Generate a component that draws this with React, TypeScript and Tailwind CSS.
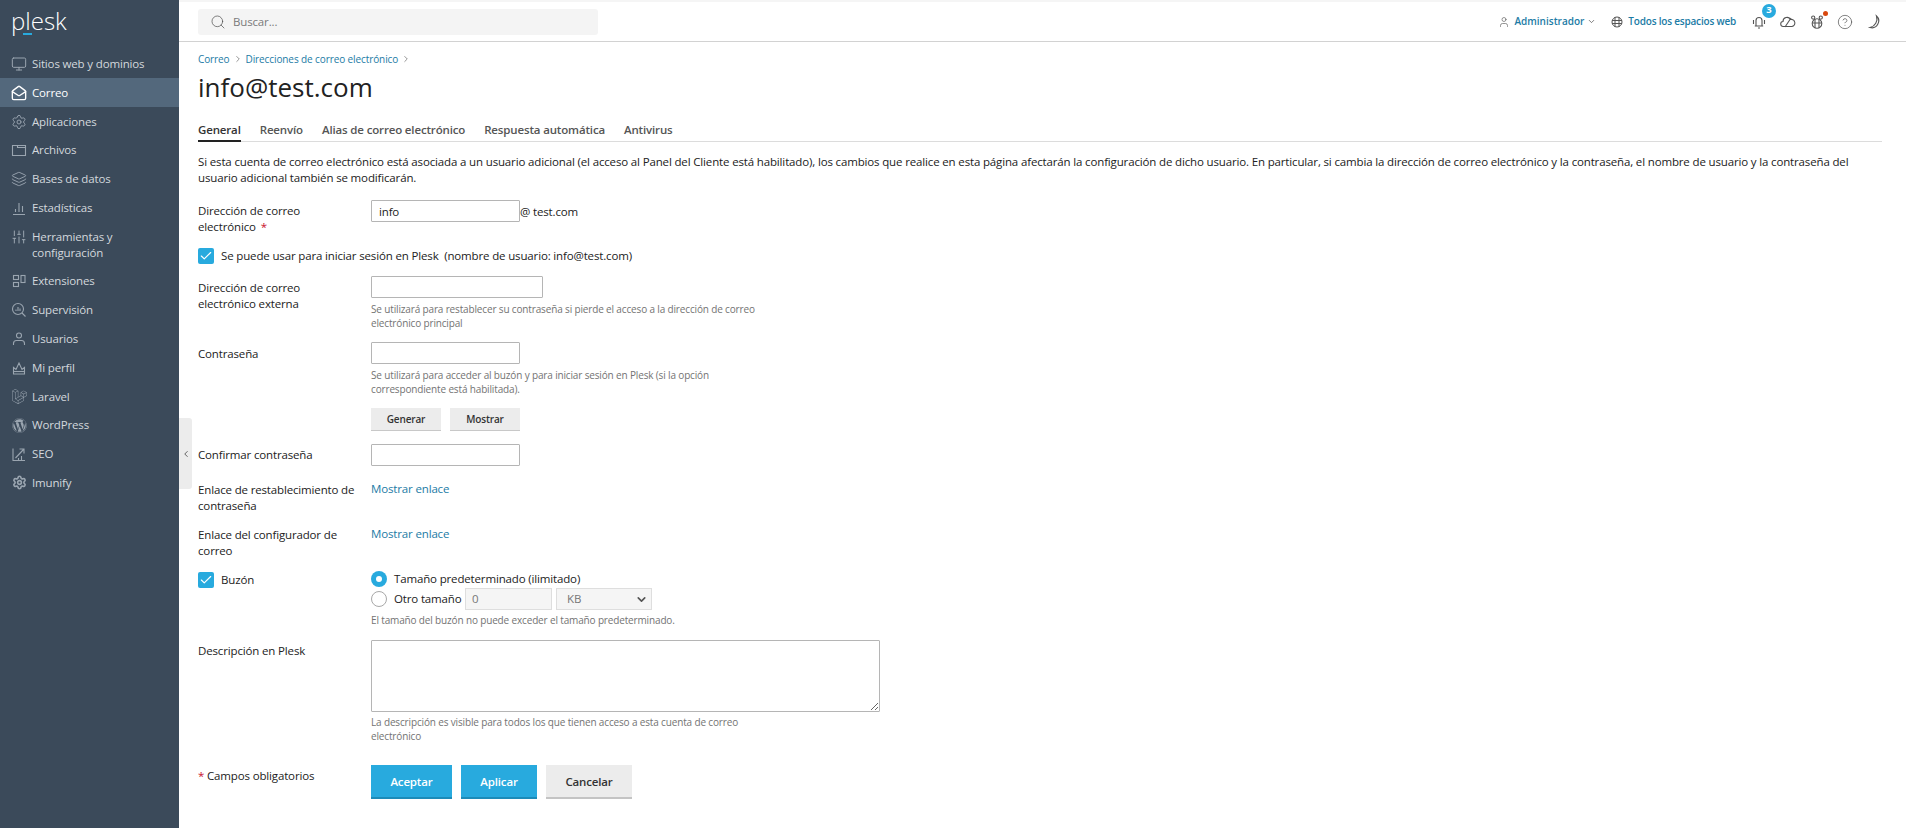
import React from "react";
import { Monitor, MailOpen, Settings, Layers, SlidersVertical, User, Search, ChevronRight, ChevronDown, ChevronLeft, CircleHelp, Check } from "lucide-react";
import { FaWordpress, FaLaravel } from "react-icons/fa";

const S = ({ children }: { children: React.ReactNode }) => (
  <svg width="16" height="16" viewBox="0 0 16 16" fill="none" stroke="currentColor" strokeWidth="1.1" className="shrink-0">{children}</svg>
);

const nav: [string, React.ReactNode, boolean?][] = [
  ["Sitios web y dominios", <Monitor size={16} strokeWidth={1.5} className="shrink-0" />],
  ["Correo", <MailOpen size={16} strokeWidth={2} className="shrink-0" />, true],
  ["Aplicaciones", <Settings size={16} strokeWidth={1.4} className="shrink-0" />],
  ["Archivos", <S><path d="M1.5 3.5h5v2h8v8h-13z" /><path d="M6.5 3.5h8v2" /></S>],
  ["Bases de datos", <Layers size={16} strokeWidth={1.4} className="shrink-0" />],
  ["Estadísticas", <S><path d="M2 14.5h12M4.5 12V9M8 12V3M11.5 12V6" /></S>],
  ["Herramientas y configuración", <SlidersVertical size={16} strokeWidth={1.5} className="shrink-0" />],
  ["Extensiones", <S><rect x="2.5" y="2.5" width="5" height="4" /><rect x="2.5" y="9.5" width="5" height="4" /><rect x="10" y="2.5" width="4" height="7" /></S>],
  ["Supervisión", <S><circle cx="7" cy="7" r="5.5" /><path d="M11 11l3.5 3.5M5 9V7.5M7 9V5M9 9V6.5" /></S>],
  ["Usuarios", <S><circle cx="8" cy="4.5" r="2.5" /><path d="M2.5 14v-1.5a3 3 0 0 1 3-3h5a3 3 0 0 1 3 3V14" /></S>],
  ["Mi perfil", <S><path d="M2.5 7.5 5 9.5 8 3l3 6.5 2.5-2V14h-11z" /><path d="M2.5 11.5h11" /></S>],
  ["Laravel", <FaLaravel size={15} className="shrink-0" />],
  ["WordPress", <FaWordpress size={15} className="shrink-0" />],
  ["SEO", <S><path d="M2 2.5v12h12" /><path d="M4.5 12l8-8.5M8.5 3h4.5v4.5M7.5 14v-2M10.5 14v-4" /></S>],
  ["Imunify", <Settings size={15} strokeWidth={2.6} className="shrink-0" />],
];

function Row({ label, children, className = "" }: { label: React.ReactNode; children: React.ReactNode; className?: string }) {
  return (
    <div className={`flex ${className}`}>
      <div className="w-[173px] shrink-0 pr-[15px] leading-[16px]">{label}</div>
      <div className="min-w-0 flex-1">{children}</div>
    </div>
  );
}

const inputCls = "block h-[22px] border border-[#b5b5b5] bg-white px-[7px] text-[11.5px] text-[#222] rounded-[1px]";

function Box() {
  return (
    <span className="flex h-[16px] w-[16px] shrink-0 items-center justify-center rounded-[2px] bg-[#28aade]">
      <Check size={14} strokeWidth={2} className="text-white" />
    </span>
  );
}

function Hint({ children, className = "mt-[4px]" }: { children: React.ReactNode; className?: string }) {
  return <div className={`${className} w-[400px] text-[10px] leading-[14px] tracking-[-0.15px] text-[#737373]`}>{children}</div>;
}

export default function App() {
  return (
    <div className="flex h-[828px] w-[1906px] overflow-hidden bg-white text-[11.5px] tracking-[-0.15px] text-[#222]" style={{ fontFamily: '"Open Sans", sans-serif' }}>
      <aside className="relative w-[179px] shrink-0 bg-[#3b4a5a] text-[#d3d8dd]">
        <div className="relative h-[49.6px] pl-[11px] pt-[9px]">
          <span className="block text-[24px] font-light leading-[24px] tracking-normal text-white">plesk</span>
          <span className="absolute left-[23px] top-[33px] h-[2px] w-[9px] bg-[#28aade]" />
        </div>
        <nav>
          {nav.map(([t, icon, active]) => (
            <div key={t} className={`flex items-start gap-[5px] py-[6.4px] pl-[11px] pr-[10px] leading-[16px] ${active ? "bg-[#53687c] text-white" : ""}`}>
              <span className={`flex h-[16px] w-[16px] shrink-0 items-center justify-center ${active ? "text-white" : "text-[#9aa5b0]"}`}>{icon}</span>
              <span>{t}</span>
            </div>
          ))}
        </nav>
        <div className="absolute left-[179px] top-[418px] z-10 flex h-[71px] w-[13px] items-center justify-center rounded-r-[3px] bg-[#ececec]">
          <ChevronLeft size={10} strokeWidth={2} className="text-[#444]" />
        </div>
      </aside>

      <div className="flex min-w-0 flex-1 flex-col">
        <header className="flex h-[42px] shrink-0 items-center border-t-2 border-b border-t-[#f5f5f5] border-b-[#d2d2d2] pl-[19px] pr-[23px]">
          <div className="flex h-[26px] w-[400px] items-center gap-[7px] rounded-[3px] bg-[#f4f4f4] px-[12px] text-[#7a7a7a]">
            <Search size={16} strokeWidth={1} className="text-[#444]" />
            <span>Buscar...</span>
          </div>
          <div className="ml-auto flex items-center text-[10px] tracking-normal text-[#1c7ba5]">
            <User size={12} strokeWidth={1.25} className="text-[#555]" />
            <span className="ml-[4px] font-semibold">Administrador</span>
            <ChevronDown size={9} strokeWidth={2} className="ml-[3px] text-[#555]" />
            <svg width="12" height="12" viewBox="0 0 12 12" fill="none" stroke="#555" className="ml-[15px]"><circle cx="6" cy="6" r="5" /><path d="M1 4.5h10M1 7.5h10M4 1v10M8 1v10" /></svg>
            <span className="ml-[5px] font-semibold tracking-[-0.2px]">Todos los espacios web</span>
            <span className="relative ml-[15px] text-[#555]">
              <S><path d="M5 12V6.5a3 3 0 0 1 6 0V12" /><path d="M3.8 12h8.4M7 14h2M2.5 6v4M13.5 6v4" /></S>
              <span className="absolute left-[11px] top-[-10px] flex h-[14px] w-[14px] items-center justify-center rounded-full bg-[#28aade] text-[9.5px] font-bold text-white">3</span>
            </span>
            <span className="ml-[13px] text-[#555]">
              <S><path d="M5 12.5H3.5a2.5 2.5 0 0 1-.5-5A4 4 0 0 1 10.5 5.5 3.5 3.5 0 0 1 12 12.5H5" /><path d="M5 13l6-9" /></S>
            </span>
            <span className="relative ml-[13px] text-[#555]">
              <S><circle cx="8" cy="9.5" r="4.8" /><circle cx="4.2" cy="3.6" r="1.6" /><circle cx="11.8" cy="3.6" r="1.6" /><path d="M3.4 9h9.2M6 5v9M10 5v9" /></S>
              <span className="absolute right-[-3px] top-[-3px] h-[5px] w-[5px] rounded-full bg-[#d9480f]" />
            </span>
            <CircleHelp size={16} strokeWidth={1.1} className="ml-[12px] text-[#555]" />
            <span className="ml-[14px] text-[#555]">
              <S><path d="M9.5 2A6.8 6.8 0 0 1 3 13.5 9 9 0 0 0 9.5 2z" /></S>
            </span>
          </div>
        </header>

        <main className="flex-1 pl-[19px] pr-[24px]">
          <div className="mt-[10px] flex h-[14px] items-center text-[10px] tracking-[-0.1px] text-[#1c7ba5]">
            <span>Correo</span>
            <ChevronRight size={10} strokeWidth={1.5} className="mx-[3px] text-[#555]" />
            <span>Direcciones de correo electrónico</span>
            <ChevronRight size={10} strokeWidth={1.5} className="mx-[3px] text-[#555]" />
          </div>
          <h1 className="mt-[5px] text-[26px] font-normal leading-[32px] tracking-normal text-[#222]">info@test.com</h1>
          <div className="mt-[14px] flex h-[25px] gap-[19px] border-b border-[#dcdcdc] pt-[4px] font-semibold text-[#555]">
            <span className="h-[21px] border-b-2 border-[#222] text-[#333]">General</span>
            <span>Reenvío</span>
            <span>Alias de correo electrónico</span>
            <span>Respuesta automática</span>
            <span>Antivirus</span>
          </div>
          <p className="mt-[12px] leading-[16px]">
            Si esta cuenta de correo electrónico está asociada a un usuario adicional (el acceso al Panel del Cliente está habilitado), los cambios que realice en esta página afectarán la configuración de dicho usuario. En particular, si cambia la dirección de correo electrónico y la contraseña, el nombre de usuario y la contraseña del usuario adicional también se modificarán.
          </p>

          <Row className="mt-[14px]" label={<span className="block pt-[3px]">Dirección de correo electrónico <span className="ml-[2px] text-[#c8102e]">*</span></span>}>
            <div className="flex items-start">
              <input readOnly value="info" className={`${inputCls} w-[149px]`} />
              <span className="mt-[4px] leading-[16px]">@ test.com</span>
            </div>
          </Row>

          <div className="mt-[13px] flex h-[16px] items-center gap-[7px]">
            <Box />
            <span>Se puede usar para iniciar sesión en Plesk&nbsp; (nombre de usuario: info@test.com)</span>
          </div>

          <Row className="mt-[12px]" label={<span className="block pt-[4px]">Dirección de correo electrónico externa</span>}>
            <input className={`${inputCls} w-[172px]`} />
            <Hint>Se utilizará para restablecer su contraseña si pierde el acceso a la dirección de correo electrónico principal</Hint>
          </Row>

          <Row className="mt-[12px]" label={<span className="block pt-[4px]">Contraseña</span>}>
            <input className={`${inputCls} w-[149px]`} />
            <Hint>Se utilizará para acceder al buzón y para iniciar sesión en Plesk (si la opción correspondiente está habilitada).</Hint>
            <div className="mt-[12px] flex gap-[9px]">
              <button className="h-[23px] w-[70px] border-b border-[#c8c8c8] bg-[#ececec] text-[10px] font-semibold text-[#333]">Generar</button>
              <button className="h-[23px] w-[70px] border-b border-[#c8c8c8] bg-[#ececec] text-[10px] font-semibold text-[#333]">Mostrar</button>
            </div>
          </Row>

          <Row className="mt-[13px]" label={<span className="block pt-[3px]">Confirmar contraseña</span>}>
            <input className={`${inputCls} w-[149px]`} />
          </Row>

          <Row className="mt-[15px]" label={<span className="block pt-[1px]">Enlace de restablecimiento de contraseña</span>}>
            <span className="block leading-[16px] text-[#1c7ba5]">Mostrar enlace</span>
          </Row>

          <Row className="mt-[12px]" label={<span className="block pt-[1px]">Enlace del configurador de correo</span>}>
            <span className="block leading-[16px] text-[#1c7ba5]">Mostrar enlace</span>
          </Row>

          <Row
            className="mt-[12px]"
            label={
              <span className="flex items-center gap-[7px] pt-[1px]">
                <Box />
                <span>Buzón</span>
              </span>
            }
          >
            <div className="flex h-[16px] items-center gap-[7px]">
              <span className="flex h-[16px] w-[16px] items-center justify-center rounded-full bg-[#28aade]">
                <span className="h-[6px] w-[6px] rounded-full bg-white" />
              </span>
              <span>Tamaño predeterminado (ilimitado)</span>
            </div>
            <div className="mt-[1px] flex h-[22px] items-center">
              <span className="h-[16px] w-[16px] rounded-full border border-[#a8a8a8] bg-white" />
              <span className="ml-[7px] w-[66px] whitespace-nowrap">Otro tamaño</span>
              <span className="ml-[5px] flex h-[22px] w-[87px] items-center border border-[#dedede] bg-[#f5f5f5] px-[6px] text-[#777]">0</span>
              <span className="ml-[4px] flex h-[22px] w-[96px] items-center justify-between border border-[#dedede] bg-[#f5f5f5] pl-[10px] pr-[3px] text-[#777]">
                KB
                <ChevronDown size={13} strokeWidth={3} className="text-[#555]" />
              </span>
            </div>
            <Hint className="mt-[3px]">El tamaño del buzón no puede exceder el tamaño predeterminado.</Hint>
          </Row>

          <Row className="mt-[13px]" label={<span className="block pt-[3px]">Descripción en Plesk</span>}>
            <textarea className="block h-[72px] w-[509px] rounded-[1px] border border-[#b5b5b5] bg-white" />
            <Hint className="mt-[3px]">La descripción es visible para todos los que tienen acceso a esta cuenta de correo electrónico</Hint>
          </Row>

          <Row className="mt-[22px]" label={<span className="block pt-[3px]"><span className="text-[#c8102e]">*</span> Campos obligatorios</span>}>
            <div className="flex gap-[9px]">
              <button className="h-[34px] w-[81px] border-b-2 border-[#1c8bb8] bg-[#28aade] pt-[2px] font-semibold text-white">Aceptar</button>
              <button className="h-[34px] w-[76px] border-b-2 border-[#1c8bb8] bg-[#28aade] pt-[2px] font-semibold text-white">Aplicar</button>
              <button className="h-[34px] w-[86px] border-b-2 border-[#c4c4c4] bg-[#ececec] pt-[2px] font-semibold text-[#333]">Cancelar</button>
            </div>
          </Row>
        </main>
      </div>
    </div>
  );
}
